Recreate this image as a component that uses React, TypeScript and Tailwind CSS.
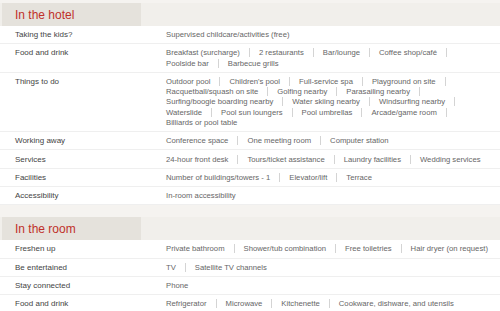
const hotel: Array<{ label: string; items: string[] }> = [
  { label: 'Taking the kids?', items: ['Supervised childcare/activities (free)'] },
  {
    label: 'Food and drink',
    items: ['Breakfast (surcharge)', '2 restaurants', 'Bar/lounge', 'Coffee shop/café', 'Poolside bar', 'Barbecue grills'],
  },
  {
    label: 'Things to do',
    items: [
      'Outdoor pool',
      "Children's pool",
      'Full-service spa',
      'Playground on site',
      'Racquetball/squash on site',
      'Golfing nearby',
      'Parasailing nearby',
      'Surfing/boogie boarding nearby',
      'Water skiing nearby',
      'Windsurfing nearby',
      'Waterslide',
      'Pool sun loungers',
      'Pool umbrellas',
      'Arcade/game room',
      'Billiards or pool table',
    ],
  },
  { label: 'Working away', items: ['Conference space', 'One meeting room', 'Computer station'] },
  {
    label: 'Services',
    items: ['24-hour front desk', 'Tours/ticket assistance', 'Laundry facilities', 'Wedding services'],
  },
  { label: 'Facilities', items: ['Number of buildings/towers - 1', 'Elevator/lift', 'Terrace'] },
  { label: 'Accessibility', items: ['In-room accessibility'] },
];

const room: Array<{ label: string; items: string[] }> = [
  {
    label: 'Freshen up',
    items: ['Private bathroom', 'Shower/tub combination', 'Free toiletries', 'Hair dryer (on request)'],
  },
  { label: 'Be entertained', items: ['TV', 'Satellite TV channels'] },
  { label: 'Stay connected', items: ['Phone'] },
  {
    label: 'Food and drink',
    items: ['Refrigerator', 'Microwave', 'Kitchenette', 'Cookware, dishware, and utensils'],
  },
];

function SectionHeader({ title }: { title: string }) {
  return (
    <div className="flex h-[23px] bg-[#f1efeb]">
      <div className="ml-[2px] flex w-[139px] items-center bg-[#e5e2dc] pl-[13px]">
        <h2 className="text-[12px] leading-none text-[#c0302a]">{title}</h2>
      </div>
    </div>
  );
}

function FeatureRow({ label, items }: { label: string; items: string[] }) {
  return (
    <div className="flex border-b border-[#efefef] bg-white py-[4.15px] pl-[15px]">
      <div className="w-[151px] shrink-0 text-[8px] leading-[9px] text-[#444]">{label}</div>
      <ul className="flex w-[325px] flex-wrap gap-y-[1.25px] text-[7.7px] leading-[9px] text-[#666]">
        {items.map((item, i) => (
          <li
            key={item}
            className={
              i < items.length - 1
                ? 'mr-[9px] border-r border-[#d4d4d4] pr-[9px]'
                : ''
            }
          >
            {item}
          </li>
        ))}
      </ul>
    </div>
  );
}

export default function App() {
  return (
    <div className="h-[311px] w-[500px] overflow-hidden bg-[#f5f3f0] pt-[3px] font-['Liberation_Sans',Arial,sans-serif]">
      <section>
        <SectionHeader title="In the hotel" />
        {hotel.map((row) => (
          <FeatureRow key={row.label} label={row.label} items={row.items} />
        ))}
      </section>

      <section className="mt-[12px]">
        <SectionHeader title="In the room" />
        {room.map((row) => (
          <FeatureRow key={row.label} label={row.label} items={row.items} />
        ))}
      </section>
    </div>
  );
}
